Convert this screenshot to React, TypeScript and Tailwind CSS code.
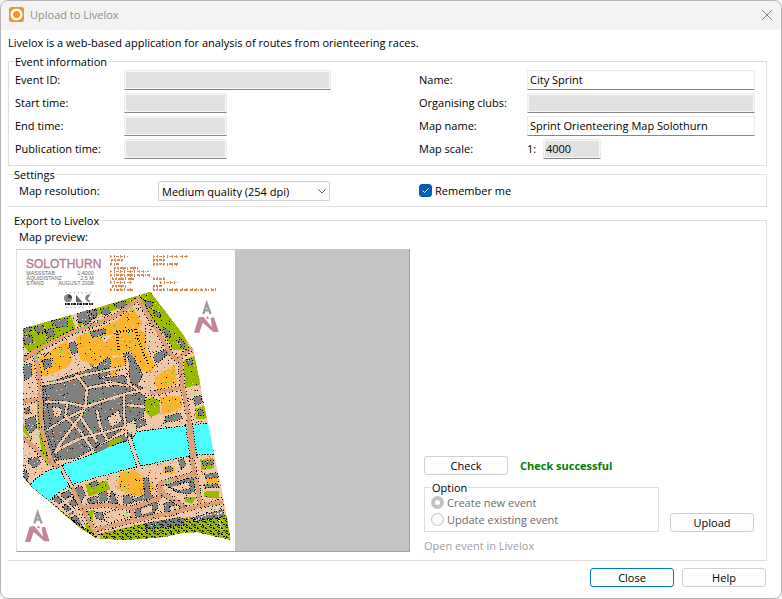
import React, { useState } from 'react';

const WINDOW_FONT = "font-['Open_Sans','Noto_Sans',sans-serif]";

interface FieldProps {
  id: string;
  label: string;
  value?: string;
  disabled?: boolean;
  prefix?: string;
  labelClass: string;
  inputClass: string;
}

function Field({ id, label, value = '', disabled, prefix, labelClass, inputClass }: FieldProps) {
  const [text, setText] = useState(value);
  return (
    <div className="flex h-5 items-center">
      <label htmlFor={id} className={`shrink-0 pb-px whitespace-nowrap ${labelClass}`}>
        {label}
      </label>
      {prefix && <span className="w-4 shrink-0 pb-px">{prefix}</span>}
      <input
        id={id}
        type="text"
        value={text}
        disabled={disabled}
        onChange={(e) => setText(e.target.value)}
        className={`h-5 min-w-0 border border-[#ececec] border-b-[#868686] px-0.5 pb-0.5 outline-none ${
          disabled ? 'bg-[#e2e2e2] shadow-[inset_0_0_0_1px_#f8f8f8]' : 'bg-white'
        } ${inputClass}`}
      />
    </div>
  );
}

function PushButton({ label, primary }: { label: string; primary?: boolean }) {
  return (
    <button
      type="button"
      className={`h-[19px] w-[84px] rounded-[3px] border bg-[#fdfdfd] text-center leading-[17px] hover:bg-[#e8f2fb] ${
        primary ? 'border-[#0078d4]' : 'border-[#d0d0d0]'
      }`}
    >
      {label}
    </button>
  );
}

function LiveloxLogo() {
  return (
    <svg viewBox="0 0 15 15" className="size-[15px]" aria-hidden="true">
      <rect width="15" height="15" rx="2.5" fill="#f7931e" />
      <circle cx="7.5" cy="7.5" r="4.8" fill="none" stroke="#fff" strokeWidth="2.6" />
      <circle cx="7.5" cy="7.5" r="2.7" fill="#f7931e" />
    </svg>
  );
}

const OUTLINE =
  'M18 235L215 180L360 137L400 125L500 255L530 300L550 405L575 530L592 615L618 735L641 870L600 862L540 847L490 850L440 862L325 870L240 866L190 835L150 800L95 752L40 707L18 680Z';

const GREEN = [
  'M18 235L160 195L175 232L150 262L100 272L70 312L45 318L18 285Z',
  'M180 192L360 137L368 152L300 178L250 192L225 210L185 232Z',
  'M365 135L400 125L500 255L520 300L470 300L440 268L410 215L370 165Z',
  'M500 330L532 318L552 405L505 412Z',
  'M535 475L562 468L570 505L538 508Z',
  'M60 440L75 500L95 620L92 650L75 620L62 520Z',
  'M385 450L400 440L428 450L428 490L400 502L382 480Z',
  'M208 370L230 378L225 392L208 384Z',
  'M305 415L328 412L330 424L308 428Z',
  'M215 340L245 322L248 335L225 352Z',
  'M18 520L40 560L45 570L18 545Z',
  'M18 680L95 750L150 795L190 815L235 835L240 866L100 780Z',
  'M250 850L420 812L540 800L630 795L641 870L540 847L440 862L325 872L250 866Z',
  'M100 715L130 710L125 735L95 748Z',
  'M205 702L270 693L280 718L215 740Z',
  'M550 628L590 625L590 655L552 660Z',
  'M560 725L605 722L608 745L562 742Z',
  'M500 740L540 740L525 762L505 755Z',
  'M205 785L230 780L228 812L205 806Z',
];

const YELLOW = [
  'M60 330L90 308L152 270L165 330L150 352L90 378L62 375Z',
  'M176 262L300 212L345 170L378 220L360 240L250 260L290 330L235 345L190 330Z',
  'M300 240L360 232L385 250L388 300L415 345L405 368L375 362L345 310L270 318L252 290Z',
  'M415 380L474 343L480 400L428 422L415 405Z',
  'M430 440L490 438L497 470L460 488L432 488Z',
  'M280 325L325 318L325 345L282 385Z',
  'M310 665L350 660L405 695L415 718L390 745L345 735L300 715Z',
  'M437 650L472 648L474 670L438 670Z',
  'M566 682L600 680L605 704L568 706Z',
  'M18 350L48 340L48 368L20 380Z',
];

const BUILDINGS = [
  // northern quarter
  'M20 235L42 230L44 242L22 248Z',
  'M20 258L45 254L48 280L22 284Z',
  'M52 232L80 225L84 246L60 248Z',
  'M85 240L108 235L112 258L90 262Z',
  'M102 212L150 205L152 230L120 232Z',
  'M180 190L212 180L232 200L210 224L184 216Z',
  'M208 182L238 178L240 202L222 210Z',
  'M250 178L275 172L282 190L255 196Z',
  'M288 162L325 152L330 168L308 176Z',
  'M220 246L265 235L268 250L226 264Z',
  'M155 280L175 275L184 308L164 314Z',
  'M75 332L100 325L104 348L82 358Z',
  'M385 150L408 158L402 176L386 168Z',
  'M410 182L430 188L432 204L414 198Z',
  'M438 232L458 242L462 264L446 258Z',
  'M410 315L450 295L464 310L440 322L425 338L412 332Z',
  'M488 262L504 280L500 296L485 276Z',
  'M507 330L525 326L528 344L512 346Z',
  'M318 310L345 312L378 375L372 385L362 405L335 400L330 350Z',
  'M240 350L272 322L280 330L278 372L245 385Z',
  // old town
  'M82 400L240 350L250 385L320 375L335 400L375 410L385 440L380 500L330 520L310 545L180 625L118 630L80 510L78 430Z',
  'M20 345L42 340L45 380L22 392Z',
  'M22 475L38 470L40 490L24 492Z',
  'M25 510L55 498L60 535L40 550L24 532Z',
  'M68 400L84 400L95 490L125 632L105 632L85 560L70 480Z',
  'M355 512L385 505L388 525L358 535Z',
  'M445 500L490 488L496 505L470 514L445 515Z',
  'M530 440L552 436L556 458L534 466Z',
  'M542 480L556 478L560 496L544 498Z',
  'M230 595L335 545L350 562L240 612Z',
  'M35 625L65 620L70 642L50 655L34 640Z',
  'M20 660L34 670L32 695L20 690Z',
  // south bank
  'M105 748L155 720L165 735L125 762Z',
  'M135 770L172 745L182 762L150 785Z',
  'M168 715L195 708L205 735L185 768L168 740Z',
  'M215 700L240 690L245 705L228 712Z',
  'M150 795L175 780L200 835L182 825Z',
  'M212 745L240 738L242 758L215 762Z',
  'M245 730L270 722L272 750L248 758Z',
  'M285 722L302 752L300 765L272 760Z',
  'M318 738L345 734L350 758L320 764Z',
  'M380 685L395 682L400 730L412 745L355 755L352 745L382 735Z',
  'M352 765L420 748L422 775L395 805L355 810Z',
  'M440 760L485 750L510 768L500 785L445 795Z',
  'M430 708L452 738L448 742L425 742Z',
  'M445 705L530 680L534 722L520 732L482 728Z',
  'M484 632L500 626L508 648L490 656Z',
  'M444 652L465 650L467 664L446 666Z',
  'M555 634L588 632L588 644L556 646Z',
  'M562 672L600 668L605 682L565 686Z',
  'M562 704L600 700L604 712L564 714Z',
  'M385 820L490 802L502 806L500 825L385 838Z',
  'M528 802L620 778L622 800L530 815Z',
  'M232 790L255 785L262 810L240 808Z',
];

const COURTS = [
  'M270 505L305 482L315 512L285 532Z',
  'M105 470L135 474L130 500L112 500Z',
  'M262 395L285 390L290 408L266 412Z',
  'M460 712L515 694L520 715L490 722Z',
  'M370 778L405 764L405 785L375 795Z',
  'M458 770L485 764L486 778L460 784Z',
  'M265 785L335 775L345 800L270 820Z',
  'M385 225L420 225L465 290L400 312L386 275Z',
];

const LANES = [
  'M60 405L130 395L200 375L330 350',
  'M84 455L150 458L205 470L330 430L385 420',
  'M175 372L210 415L205 470',
  'M205 415L290 400L335 408',
  'M90 540L140 510L200 480',
  'M150 458L145 500L190 545L225 595',
  'M205 470L190 500L130 580L115 610',
  'M190 500L240 575',
  'M120 600L190 565L330 530',
  'M240 480L250 530L270 570',
  'M320 430L322 500L328 560',
  'M330 318L335 400L400 445',
  'M330 465L380 470',
  'M120 730L180 790L205 835',
  'M160 800L205 770',
];

const ROADS = [
  'M18 330L60 300L170 245L230 225L300 195L360 150L375 152',
  'M360 140L420 240L460 310L490 340',
  'M52 300L66 370L70 440L75 540L105 640L140 660L185 755L210 800L240 858',
  'M18 455L60 450',
  'M18 560L60 600L105 645',
  'M185 772L270 765L345 775L425 745L430 700L530 672',
  'M240 838L350 812L460 790L540 770L618 755',
  'M425 705L445 735L500 768',
  'M345 775L350 818',
  'M530 290L490 320L495 400L515 500L522 610L535 680L550 760',
  'M400 430L500 412',
];

const RIVER =
  'M38 707L58 684L95 660L128 652L145 642L235 608L275 590L345 568L360 545L440 535L518 526L580 518L592 612L530 615L420 638L340 655L240 682L160 705L125 728L95 752Z';

// Small symbols scattered over the land, on the 3-unit raster of the sheet.
const SPECKLES = (() => {
  const fills = ['#000000', '#35e35a', '#c8641e', '#fbe3d0', '#000000', '#c8641e'];
  let seed = 4217;
  const next = () => {
    seed = (seed * 1103515245 + 12345) % 2147483648;
    return seed / 2147483648;
  };
  return fills.map((fill) => {
    let d = '';
    for (let i = 0; i < 460; i++) {
      const x = 18 + Math.floor(next() * 207) * 3;
      const y = 126 + Math.floor(next() * 248) * 3;
      d += `M${x} ${y}h3v3h-3z`;
    }
    return { fill, d };
  });
})();

const CREDITS = [
  'M280 19h54M408 19h108',
  'M282 30h42M408 30h38',
  'M280 42h30M408 42h76',
  'M290 54h72',
  'M280 64h116',
  'M280 75h118',
  'M284 86h70M408 86h42',
  'M280 97h64M430 97h52',
  'M284 108h44M408 108h30',
  'M280 119h72M408 119h188',
];

function NorthArrow({ x, y }: { x: number; y: number }) {
  return (
    <g transform={`translate(${x} ${y})`}>
      <path d="M28 36L38 4L50 36M33 25H46" fill="none" stroke="#9c9c9c" strokeWidth="7" />
      <path d="M0 92L14 46L28 44L54 76L50 48L60 46L74 90L58 90L26 62L16 92Z" fill="#c4849a" />
      <path d="M36 50L40 42L45 50Z" fill="#c4849a" />
    </g>
  );
}

function MapSheet() {
  return (
    <svg viewBox="0 0 654 903" className="block h-[301px] w-[218px] bg-white" role="img" aria-label="Map preview">
      <defs>
        <clipPath id="map-outline">
          <path d={OUTLINE} />
        </clipPath>
        <pattern id="forest" width="24" height="18" patternUnits="userSpaceOnUse">
          <path d="M0 0h3v3h6v3h-6v-3h-3zM12 3h3v3h3v3h-6zM18 12h6v3h-6zM3 12h3v3h3v3h-6z" fill="#111" />
        </pattern>
      </defs>

      <g clipPath="url(#map-outline)" shapeRendering="crispEdges">
        <path d={OUTLINE} fill="#f0c8a8" />
        <path d={GREEN.join('')} fill="#9aba00" />
        <path d={YELLOW.join('')} fill="#fdb52e" />
        <path d={BUILDINGS.join('')} fill="#808080" stroke="#000" strokeWidth="3" strokeDasharray="3 5" />
        <path d={COURTS.join('')} fill="#f0c8a8" stroke="#000" strokeWidth="3" strokeDasharray="3 7" />
        <path d={LANES.join('')} fill="none" stroke="#000" strokeWidth="12" strokeDasharray="3 7" />
        <path d={LANES.join('')} fill="none" stroke="#f0c8a8" strokeWidth="7" />
        <path d={ROADS.join('')} fill="none" stroke="#000" strokeWidth="18" strokeDasharray="3 8" />
        <path d={ROADS.join('')} fill="none" stroke="#dc9f76" strokeWidth="12" />
        {SPECKLES.map((s, i) => (
          <path key={i} d={s.d} fill={s.fill} />
        ))}
        <path d="M305 300L300 245L355 240L375 300L395 345" fill="none" stroke="#000" strokeWidth="8" strokeDasharray="3 6" />
        <path d="M250 850L420 815L540 802L630 797L641 870L540 847L440 862L325 872L250 866Z" fill="url(#forest)" />
        <path d="M18 683L95 755L150 800L240 862" fill="none" stroke="#000" strokeWidth="7" strokeDasharray="4 6" />
        <path d="M535 812L565 795L620 788M598 770L612 840" fill="none" stroke="#ddd" strokeWidth="4" strokeDasharray="6 4" />
        <path d={RIVER} fill="#4dffff" stroke="#000" strokeWidth="3" strokeDasharray="4 4" />
        <path d="M272 578L310 560L316 570L280 590Z" fill="#9aba00" />
        <path d="M230 598L270 582L275 592L240 608Z" fill="#808080" />
        <path d="M130 650L165 710M336 560L366 652" fill="none" stroke="#000" strokeWidth="15" strokeDasharray="3 4" />
        <path d="M130 650L165 710M336 560L366 652" fill="none" stroke="#f0c8a8" strokeWidth="8" />
        <path d="M516 520L530 625" fill="none" stroke="#000" strokeWidth="24" strokeDasharray="3 5" />
        <path d="M516 520L530 625" fill="none" stroke="#dc9f76" strokeWidth="18" />
      </g>

      <g fontFamily="'Liberation Sans', Arial, sans-serif">
        <text x="27" y="53" fontSize="36" fill="#b87890" stroke="#b87890">
          SOLOTHURN
        </text>
        <g fontSize="16" fill="#666">
          <text x="28" y="74">MASSSTAB</text>
          <text x="230" y="74" textAnchor="end">1:4000</text>
          <text x="28" y="89">ÄQUIDISTANZ</text>
          <text x="230" y="89" textAnchor="end">2,5 M</text>
          <text x="28" y="104">STAND</text>
          <text x="230" y="104" textAnchor="end">AUGUST 2008</text>
        </g>
      </g>

      {/* Credits block, too small to be legible at preview scale */}
      <g shapeRendering="crispEdges" fill="none" stroke="#dc8a55">
        <path d={CREDITS.join('')} strokeWidth="5" strokeDasharray="6 4 3 5 9 4" />
        <path d={CREDITS.join('')} strokeWidth="9" strokeDasharray="3 9 3 14" />
      </g>

      {/* Club logo */}
      <g>
        <path d="M146 128h82M148 173h60" stroke="#aaa" strokeWidth="3" strokeDasharray="4 8" />
        <circle cx="153" cy="145" r="12" fill="#8a8a8a" />
        <path d="M153 145V133a12 12 0 0 1 12 12z" fill="#444" />
        <path d="M177 157V134l20 23z" fill="#666" />
        <path d="M220 134a11 11 0 1 0 2 19l-10 -5z" fill="#808080" />
        <path d="M144 162h84" stroke="#111" strokeWidth="6" strokeDasharray="5 2 8 3" />
      </g>

      <NorthArrow x={531} y={156} />
      <NorthArrow x={24} y={784} />
    </svg>
  );
}

function OptionRadio({ label, value, checked }: { label: string; value: string; checked?: boolean }) {
  return (
    <label className="flex h-[17px] items-center gap-[3px] text-[#6d6d6d]">
      <input
        type="radio"
        name="event-option"
        value={value}
        defaultChecked={checked}
        disabled
        className="size-[13px] appearance-none rounded-full border border-[#c3c3c3] bg-[#fbfbfb] checked:border-4 checked:bg-white"
      />
      {label}
    </label>
  );
}

export default function App() {
  const [resolution, setResolution] = useState('254');
  const [remember, setRemember] = useState(true);

  return (
    <div className="min-h-screen bg-[#f3f3f3]">
      <main
        className={`flex min-h-screen flex-col overflow-hidden rounded-lg border border-[#b4b4b4] bg-white text-[11px] leading-[13px] text-black ${WINDOW_FONT}`}
      >
        <header className="flex h-[29px] items-center bg-[#f3f3f3] pr-[7px] pb-0.5 pl-2">
          <LiveloxLogo />
          <h1 className="ml-1.5 flex-1 text-[#8f8f8f]">Upload to Livelox</h1>
          <button type="button" aria-label="Close window" className="p-0.5">
            <svg viewBox="0 0 10 10" className="size-2.5" fill="none" stroke="#868686" aria-hidden="true">
              <path d="M0 0L10 10M10 0L0 10" />
            </svg>
          </button>
        </header>

        <div className="flex flex-1 flex-col pr-[14px] pl-[7px]">
          <p className="mt-1.5">
            Livelox is a web-based application for analysis of routes from orienteering races.
          </p>

          <fieldset className="mt-1.5 border border-[#dfdfdf] pr-[11px] pb-1.5 pl-1.5">
            <legend className="pr-px">Event information</legend>
            <div className="grid grid-cols-[404fr_336fr] pt-0.5">
              <div className="flex flex-col gap-[3px]">
                <Field id="event-id" label="Event ID:" disabled labelClass="w-[109px]" inputClass="w-[207px]" />
                <Field id="start-time" label="Start time:" disabled labelClass="w-[109px]" inputClass="w-[103px]" />
                <Field id="end-time" label="End time:" disabled labelClass="w-[109px]" inputClass="w-[103px]" />
                <Field id="publication-time" label="Publication time:" disabled labelClass="w-[109px]" inputClass="w-[103px]" />
              </div>
              <div className="flex flex-col gap-[3px]">
                <Field id="name" label="Name:" value="City Sprint" labelClass="w-[108px]" inputClass="flex-1" />
                <Field id="clubs" label="Organising clubs:" disabled labelClass="w-[108px]" inputClass="flex-1" />
                <Field id="map-name" label="Map name:" value="Sprint Orienteering Map Solothurn" labelClass="w-[108px]" inputClass="flex-1" />
                <Field id="map-scale" label="Map scale:" prefix="1:" value="4000" disabled labelClass="w-[108px]" inputClass="w-[58px]" />
              </div>
            </div>
          </fieldset>

          <fieldset className="mt-0.5 border border-l-0 border-[#dfdfdf] pr-[11px] pb-[5px] pl-1.5">
            <legend>Settings</legend>
            <div className="grid grid-cols-[405fr_336fr]">
              <div className="flex items-center pl-[5px]">
                <label htmlFor="resolution" className="w-[139px] shrink-0 pb-px">
                  Map resolution:
                </label>
                <div className="relative w-[172px]">
                  <select
                    id="resolution"
                    value={resolution}
                    onChange={(e) => setResolution(e.target.value)}
                    className="block h-5 w-full appearance-none rounded-[2px] border border-[#d2d2d2] bg-[#fdfdfd] pr-5 pl-[3px]"
                  >
                    <option value="127">Low quality (127 dpi)</option>
                    <option value="254">Medium quality (254 dpi)</option>
                    <option value="508">High quality (508 dpi)</option>
                  </select>
                  <svg viewBox="0 0 8 5" className="pointer-events-none absolute top-2 right-1 h-[5px] w-2" fill="none" stroke="#5a5a5a" aria-hidden="true">
                    <path d="M0.5 0.5L4 4L7.5 0.5" />
                  </svg>
                </div>
              </div>
              <label className="flex items-center gap-[3px] pb-0.5">
                <span className="grid">
                  <input
                    type="checkbox"
                    checked={remember}
                    onChange={(e) => setRemember(e.target.checked)}
                    className="col-start-1 row-start-1 size-[13px] appearance-none rounded-[3px] border border-[#8a8a8a] bg-white checked:border-[#005fb8] checked:bg-[#005fb8]"
                  />
                  {remember && (
                    <svg viewBox="0 0 13 13" className="pointer-events-none col-start-1 row-start-1 size-[13px]" fill="none" stroke="#fff" aria-hidden="true">
                      <path d="M3.5 6.5L5.5 8.5L9.5 4.5" />
                    </svg>
                  )}
                </span>
                Remember me
              </label>
            </div>
          </fieldset>

          <fieldset className="mt-[7px] border border-l-0 border-[#dfdfdf] pb-2">
            <legend className="pl-1.5">Export to Livelox</legend>
            <div className="pt-[3px] pl-[11px]">Map preview:</div>
            <div className="mt-1.5 flex pl-2">
              <div className="flex-1 border border-[#e0e0e0] border-t-[#c8c8c8] border-r-[#a0a0a0] border-b-[#a0a0a0] bg-[#c5c5c5]">
                <MapSheet />
              </div>

              <div className="flex w-[356px] shrink-0 flex-col justify-end pr-3 pl-[14px]">
                <div className="flex items-center gap-3">
                  <PushButton label="Check" />
                  <output className="font-bold text-[#008000]">Check successful</output>
                </div>
                <div className="mt-1.5 flex items-end justify-between">
                  <fieldset className="w-[235px] border border-[#dfdfdf] pb-[3px] pl-1.5" disabled>
                    <legend className="px-px">Option</legend>
                    <OptionRadio label="Create new event" value="create" checked />
                    <OptionRadio label="Update existing event" value="update" />
                  </fieldset>
                  <PushButton label="Upload" />
                </div>
                <a href="#livelox" aria-disabled="true" className="mt-[7px] text-[#a0a0a0]">
                  Open event in Livelox
                </a>
              </div>
            </div>
          </fieldset>

          <footer className="mt-[7px] flex justify-end gap-2 pr-px">
            <PushButton label="Close" primary />
            <PushButton label="Help" />
          </footer>
        </div>
      </main>
    </div>
  );
}
